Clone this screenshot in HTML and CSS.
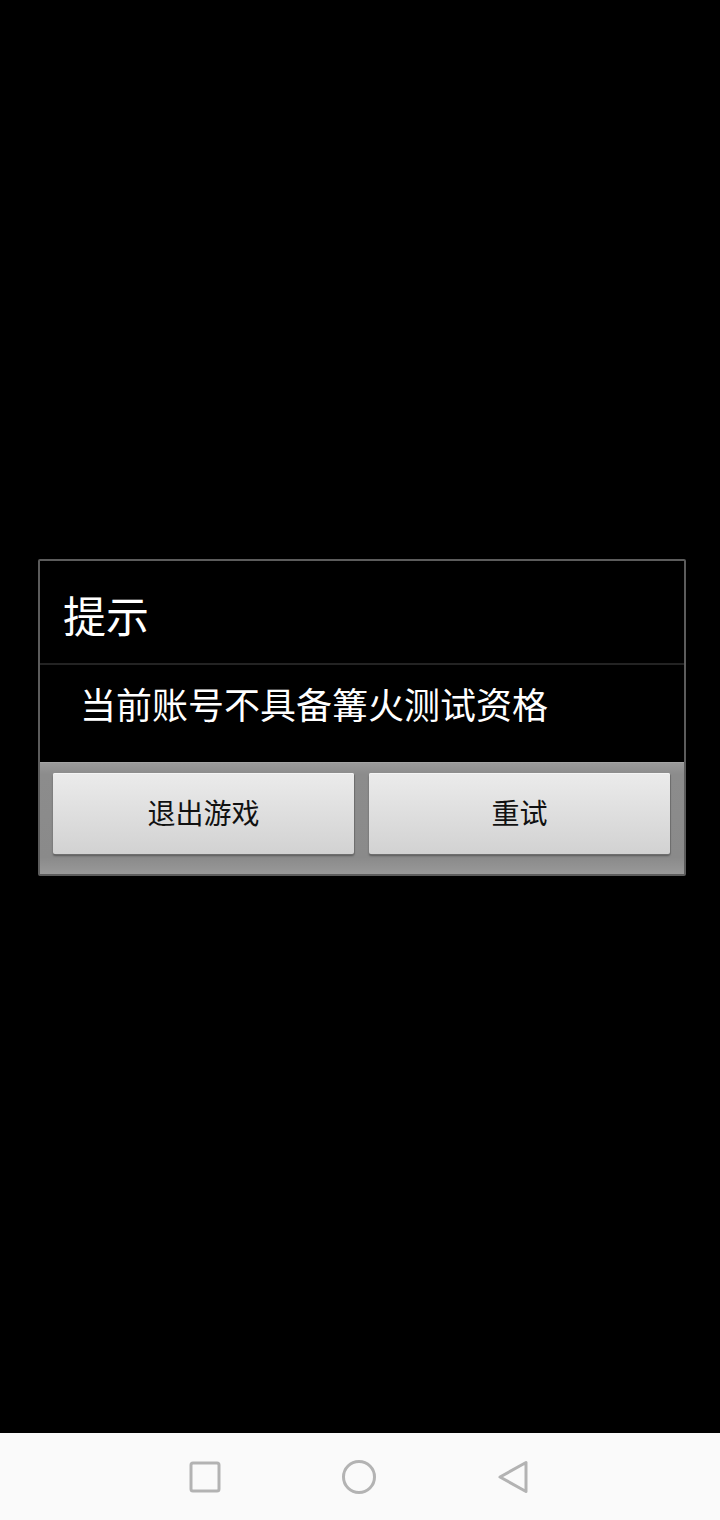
FILE: index.html
```html
<!DOCTYPE html>
<html lang="zh-CN">
<head>
    <meta charset="utf-8">
    <title>提示</title>
    <link rel="stylesheet" href="styles.css">
</head>
<body>
    <div class="screen">
        <div class="stage">
            <div class="dialog">
                <div class="dialog-title">提示</div>
                <div class="dialog-message">当前账号不具备篝火测试资格</div>
                <div class="dialog-buttons">
                    <button class="btn">退出游戏</button>
                    <button class="btn">重试</button>
                </div>
            </div>
        </div>
        <!--Navigation bar-->
        <div class="navbar">
            <svg width="34" height="34" viewBox="0 0 34 34">
                <rect x="3" y="3" width="28" height="28" rx="2" fill="none" stroke="#b3b3b3" stroke-width="3"/>
            </svg>
            <svg width="36" height="36" viewBox="0 0 36 36">
                <circle cx="18" cy="18" r="15.5" fill="none" stroke="#b3b3b3" stroke-width="3"/>
            </svg>
            <svg width="36" height="36" viewBox="0 0 36 36">
                <path d="M30 3.5 L30 32.5 L4 18 Z" fill="none" stroke="#b3b3b3" stroke-width="3" stroke-linejoin="round"/>
            </svg>
        </div>
    </div>
</body>
</html>
```

FILE: styles.css
```css
html, body {
    margin: 0;
    padding: 0;
    background: #000;
}

body {
    font-family: "Noto Sans CJK SC", "Noto Sans", sans-serif;
}

div.screen {
    width: 720px;
    height: 1520px;
    display: flex;
    flex-direction: column;
}

/*This section sets the design of the dialog.*/
div.stage {
    flex: 1;
    padding: 559px 34px 0 38px;
}

div.dialog {
    width: 644px;
    border: 2px solid #5c5c5c;
    border-radius: 2px;
    background: #000;
    display: flex;
    flex-direction: column;
}

div.dialog-title {
    height: 104px;
    box-sizing: border-box;
    padding: 4px 0 0 23px;
    display: flex;
    align-items: center;
    color: #fff;
    font-size: 43px;
    border-bottom: 2px solid #232323;
    margin-bottom: -1px;
}

div.dialog-message {
    height: 98px;
    box-sizing: border-box;
    padding: 0 0 20px 40px;
    display: flex;
    align-items: center;
    color: #fff;
    font-size: 36px;
}

div.dialog-buttons {
    height: 112px;
    box-sizing: border-box;
    padding: 10px 14px 0 13px;
    display: flex;
    gap: 15px;
    background: linear-gradient(#9a9a9a, #8c8c8c 10%, #8a8a8a 85%, #999 100%);
    border-top: 1px solid #a5a5a5;
}

button.btn {
    flex: 1;
    height: 81px;
    border: none;
    border-radius: 2px;
    background: linear-gradient(#ebebeb, #dcdcdc 60%, #d2d2d2);
    box-shadow: 1px 1px 0 #6e6e6e, 0 2px 2px rgba(0, 0, 0, 0.35), inset 0 1px 0 #f4f4f4;
    color: #111;
    font-family: "Noto Sans CJK SC", sans-serif;
    font-size: 28px;
    padding: 0 0 4px 0;
}

/*This section sets the design of the navigation bar.*/
div.navbar {
    height: 87px;
    background: #fafafa;
    display: flex;
    align-items: center;
    justify-content: center;
    gap: 119px;
}
```
